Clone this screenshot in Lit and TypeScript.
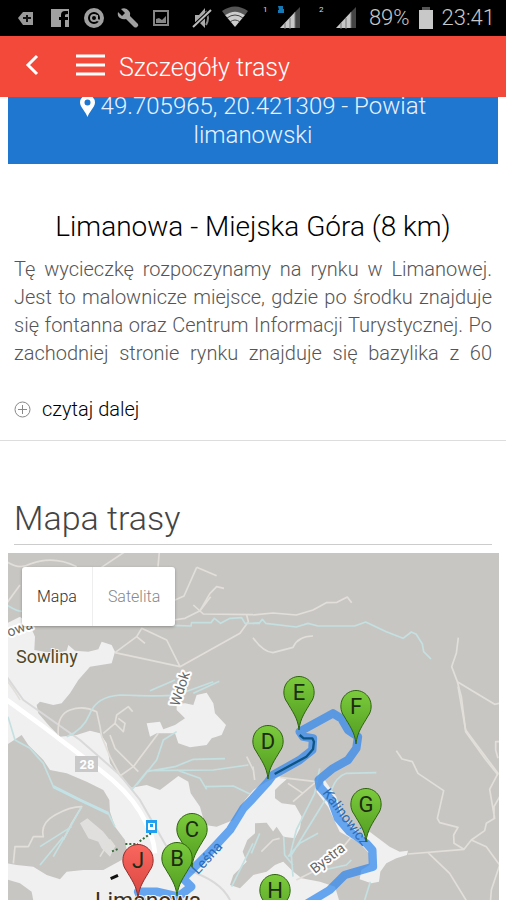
import { LitElement, html, svg, css } from "lit";
import { customElement, state } from "lit/decorators.js";

interface Pin {
  letter: string;
  x: number;
  y: number;
  kind?: "end";
}

const PINS: Pin[] = [
  { letter: "E", x: 291, y: 139 },
  { letter: "F", x: 348, y: 153 },
  { letter: "D", x: 260, y: 188 },
  { letter: "G", x: 358, y: 251 },
  { letter: "C", x: 184, y: 276 },
  { letter: "B", x: 169, y: 305 },
  { letter: "J", x: 130, y: 307, kind: "end" },
  { letter: "H", x: 267, y: 337 },
];

@customElement("status-bar")
export class StatusBar extends LitElement {
  static styles = css`
    :host {
      display: flex;
      justify-content: space-between;
      align-items: center;
      height: 36px;
      padding: 0 11px 0 15px;
      background: #000;
      color: #c8c8c8;
      font: 400 22px/36px Roboto, sans-serif;
    }
    .group {
      display: flex;
      align-items: center;
      gap: 12px;
    }
    .system {
      gap: 8px;
    }
    .clock {
      font-weight: 300;
    }
    .icon {
      display: block;
      width: 22px;
      height: 24px;
    }
    .wifi {
      width: 28px;
    }
    .sim {
      width: 48px;
    }
    .battery {
      width: 16px;
    }
    .digit {
      font: 400 8px Roboto, sans-serif;
      fill: #ddd;
    }
  `;

  private sim(n: string, data: boolean) {
    return html`<svg class="icon sim" viewBox="0 0 48 24">
      <text class="digit" x="6" y="6">${n}</text>
      ${data
        ? svg`<path d="M21 0h5v3h1v4h-6v-3h1z" fill="#1479b4" />`
        : ""}
      <path d="M43 1v21h-5V6z" fill="#444" />
      <path d="M38 6v16H23z" fill="#c8c8c8" />
      <path d="M28 17v6M33 12v11M38 6v16" stroke="#777" stroke-width="1" />
    </svg>`;
  }

  render() {
    return html`
      <div class="group">
        <svg class="icon" viewBox="0 0 22 24">
          <path d="M3 12l5-6h10v13H8z" fill="#999" />
          <path d="M12 9v7M8 12h8" stroke="#111" stroke-width="2" />
        </svg>
        <svg class="icon" viewBox="0 0 22 24">
          <path d="M2 3h18v18h-4v-7h3v-3h-3V9q0-1 3-1V5h-3q-4 0-4 4v2h-2v3h2v7H2z" fill="#a0a0a0" />
        </svg>
        <svg class="icon" viewBox="0 0 22 24">
          <circle cx="11" cy="12" r="8" fill="none" stroke="#a0a0a0" stroke-width="4" />
          <circle cx="11" cy="12" r="3" fill="none" stroke="#a0a0a0" stroke-width="2" />
          <path d="M14 9v5l3 1" fill="none" stroke="#a0a0a0" stroke-width="2" />
        </svg>
        <svg class="icon" viewBox="0 0 22 24">
          <path d="M1 6l4 4 3-3-4-4q5-2 8 2 2 2 1 5l8 8q1 2-1 3-1 1-3 0l-8-8q-3 1-6-1-3-2-2-6z" fill="#a0a0a0" />
        </svg>
        <svg class="icon" viewBox="0 0 22 24">
          <rect x="3" y="5" width="14" height="14" fill="none" stroke="#858585" stroke-width="2" />
          <path d="M5 17v-4l3-1 3 2 4-4v7z" fill="#858585" />
        </svg>
      </div>
      <div class="group system">
        <svg class="icon" viewBox="0 0 22 24">
          <path d="M4 9h4l6-7v20l-6-6H4z" fill="#aaa" />
          <path d="M15 5q4 7 0 14" fill="none" stroke="#888" stroke-width="2" />
          <path d="M2 21L20 4" stroke="#000" stroke-width="4" />
          <path d="M2 21L20 4" stroke="#bbb" stroke-width="2" />
        </svg>
        <svg class="icon wifi" viewBox="0 0 28 24">
          <path d="M1 5q13-9 26 0l-3 4q-10-7-20 0z" fill="#555" />
          <path d="M4 9q10-7 20 0L14 21z" fill="#ccc" />
          <path d="M6 12q8-6 16 0M9 16q5-4 10 0" fill="none" stroke="#444" stroke-width="1" />
        </svg>
        ${this.sim("1", true)} ${this.sim("2", false)}
        <span class="clock">89%</span>
        <svg class="icon battery" viewBox="0 0 16 24">
          <path d="M4 1h8v3H4z" fill="#555" />
          <path d="M1 4h14v19H1z" fill="#c8c8c8" />
        </svg>
        <span class="clock">23:41</span>
      </div>
    `;
  }
}

@customElement("route-map")
export class RouteMap extends LitElement {
  @state() private view = "mapa";

  static styles = css`
    :host {
      display: grid;
      background: #c8c6c3;
      overflow: hidden;
      min-height: 0;
    }
    .canvas,
    .switch {
      grid-area: 1 / 1;
    }
    .canvas {
      width: 100%;
      height: 100%;
      min-height: 0;
    }
    .switch {
      justify-self: start;
      align-self: start;
      z-index: 1;
      display: flex;
      margin: 14px;
      border-radius: 3px;
      background: #fff;
      box-shadow: 0 1px 3px rgba(0, 0, 0, 0.3);
    }
    .tab {
      height: 59px;
      padding: 0 15px;
      border: 0;
      background: none;
      color: #888;
      font: 300 16px/59px Roboto, sans-serif;
    }
    .tab + .tab {
      border-left: 1px solid #eee;
    }
    .tab.on {
      color: #333;
    }
    .land {
      fill: #c8c6c3;
    }
    .town {
      fill: #f0f0f0;
    }
    .road,
    .water,
    .wide,
    .lane {
      fill: none;
      stroke: #e2dfda;
      stroke-width: 5;
      stroke-linejoin: round;
    }
    .water {
      stroke: #c4e0e0;
    }
    .lane {
      stroke: #d9d9d9;
      stroke-width: 6;
    }
    .wide {
      stroke: #fff;
      stroke-width: 14;
    }
    .trail {
      fill: none;
      stroke: #2f86ee;
      stroke-opacity: 0.72;
      stroke-width: 25;
      stroke-linejoin: round;
      stroke-linecap: round;
    }
    .trail-core {
      fill: none;
      stroke: #0c5585;
      stroke-width: 7;
      stroke-linejoin: round;
    }
    .place {
      font: 400 18px Roboto, sans-serif;
      fill: #4f4828;
      stroke: #f4f4f4;
      stroke-width: 2px;
      paint-order: stroke;
    }
    .city {
      font-size: 23px;
      fill: #3d3020;
    }
    .street {
      font: 400 14px Roboto, sans-serif;
      fill: #666;
      stroke: #fff;
      stroke-width: 4px;
      stroke-linejoin: round;
      paint-order: stroke;
    }
    .on-trail {
      fill: #2a6cb8;
      stroke: none;
    }
    .shield {
      font: 700 13px Roboto, sans-serif;
      fill: #fff;
      text-anchor: middle;
    }
    .letter {
      font: 400 22px Roboto, sans-serif;
      fill: #1c2c12;
      text-anchor: middle;
    }
    .pin {
      fill: url(#green);
      stroke: #2f6310;
    }
    .pin.end {
      fill: url(#red);
      stroke: #8e2f2c;
    }
  `;

  private pin(p: Pin) {
    return svg`<g transform="translate(${p.x} ${p.y})">
      <path class="pin ${p.kind ?? ""}" d="M0 38C-1 26-7 19-12 10C-16 5-16-3-13-8C-7-18 7-18 13-8C16-3 16 5 12 10C7 19 1 26 0 38Z" />
      <text class="letter" y="8">${p.letter}</text>
    </g>`;
  }

  private tab(id: string, label: string) {
    const on = this.view === id;
    return html`<button
      class="tab ${on ? "on" : ""}"
      aria-pressed=${on}
      @click=${() => (this.view = id)}
    >${label}</button>`;
  }

  render() {
    return html`
      <svg class="canvas" viewBox="0 0 491 347" preserveAspectRatio="xMidYMin slice">
        <defs>
          <linearGradient id="green" x2="0" y2="1">
            <stop offset="0" stop-color="#7ccb3c" />
            <stop offset="1" stop-color="#4f9a20" />
          </linearGradient>
          <linearGradient id="red" x2="0" y2="1">
            <stop offset="0" stop-color="#f9675f" />
            <stop offset="1" stop-color="#d94640" />
          </linearGradient>
        </defs>
        <g transform="scale(0.33333)">
          <g transform="translate(-24 411)">
            <path class="town" d="M20-200L60-220 90-195 105-160 103-120 160-110 200-118 205-135 225-118 265-115 295-122 305-145 335-135 345-115 335-80 270-70 235-30 210 10 185 40 160 45 120 35 110 45 115 70 150 110 180 140 230 135 270 122 300 130 320 160 330 220 360 260 395 293 440 285 480 300 535 258 565 275 572 310 600 350 615 405 650 410 700 390 735 330 760 300 800 275 835 258 860 268 840 285 825 300 825 325 845 340 885 345 905 380 900 415 885 445 850 440 830 410 800 450 830 520 850 515 880 545 905 565 960 575 1005 590 1020 640 1020 1000 20 1000Z" />
            <path class="land" d="M20 165L65 135 85 165 130 210 150 240 200 250 260 275 310 300 328 330 330 365 345 410 375 450 380 480 365 510 310 540 250 540 200 545 180 568 140 555 100 530 50 525 20 520Z" />
            <path class="land" d="M20 568L60 580 95 605 105 660 20 660Z" />
            <path class="town" d="M240 400L262 385 310 425 345 470 330 500 305 475 295 455 265 445Z" opacity=".6" />
            <path class="land" d="M765 400L800 398 820 425 812 460 850 440 865 490 848 515 825 525 800 545 760 555 720 595 690 585 700 555 740 515 728 485 742 450 765 430Z" />
            <path class="town" d="M440 100L480 95 490 118 525 105 555 85 530 60 530 42 555 40 580 45 590 15 620 8 640 40 645 70 678 105 665 135 635 145 620 165 570 172 535 160 525 130 470 130 450 140Z" />
          </g>
          <g transform="translate(735 411)">
            <path class="town" d="M215 270L250 320 270 385 330 440 350 425 410 470 440 485 465 482 462 495 430 505 400 520 382 545 378 575 355 580 320 568 325 540 350 525 348 490 320 460 260 425 225 350 190 305Z" />
          </g>
          <g transform="translate(-24 -219)">
            <path class="road" d="M20 245Q60 270 90 252 160 225 230 260M300 265L375 215M478 215L474 260M20 370L60 315M590 262L650 287M590 262L552 348 520 362M520 420L555 415 600 392 630 340 650 320 672 325M632 350L600 392M580 375L610 402 759 404M740 405L745 425 720 460 540 560 345 518M540 560L500 480 425 445 410 470 345 518M410 470L435 490M20 600Q50 640 60 660" />
            <path class="water" d="M20 375Q60 400 70 392M515 436L573 438 575 428 633 428 643 415 662 430 690 415 725 413 735 430 780 430M450 632L525 600M658 604L580 640" />
          </g>
          <g transform="translate(735 -39)">
            <path class="road" d="M0 225L60 219 130 225 180 210 220 188 252 187 283 171 296 188M0 293Q30 335 60 338L120 322Q135 288 180 288M616 293L610 340 596 380 613 425 725 493 740 490M613 425L625 470 638 575 695 655 735 705M650 448L725 493" />
            <path class="water" d="M0 250L20 248 28 238 38 250 130 261 165 250 195 258 305 258 338 246 400 275 450 295 475 276 490 283 508 312 512 335 534 357" />
          </g>
          <g transform="translate(-24 411)">
            <path class="lane" d="M20-40L70 30 240 150 360 255 420 330 500 470M560 540Q660 570 690 630" />
            <path class="wide" d="M10 22L130 110 300 240Q380 300 420 365T465 490" />
            <path class="road" d="M175 135Q170 75 210 60T290 65L300 110 305 140 330 200 360 255M310 130L345 100 350 75 385 50 398 65M345 100L370 125 375 100 355 85M330 135L345 175 415 245M360 258L400 230 475 130M40 520L45 470 85 470 100 440 130 440Q120 400 165 375T245 350L215 400 190 450M300 500L330 450 345 470M740 200L760 240" />
            <path class="water" d="M200 140Q250 120 270 70T360 15Q480 20 530 15L640-25M24 80L45 150 90 175 130 220 160 290 240 330 325 370 345 410M395 300L440 245 525 230 580 208 675 206M410 285L470 210 490 150 530 125M440 242L640 240 745 225M530 240L600 265 620 298M615 290L700 288 750 312M245 350L200 430 160 500M215 410L120 470M190 440L120 525M759 460L695 590" />
            <path d="M160 290L240 330 325 370" fill="none" stroke="#c3e2e6" stroke-width="9" />
          </g>
          <g transform="translate(735 411)">
            <path class="road" d="M430 182L447 207 478 215 495 250 572 302 553 385 560 398 615 412 602 435 603 460 633 478 465 492M615-10L638 120 735 250 710 298 725 385 700 400 695 422 655 450 633 478M655 450L700 470 740 525 715 600 712 640M525 488L590 550 645 640M740 155H728V180L735 205M723 385V350L740 320M80 262L190 275 120 335M105 280L150 310M0 230L5 270M25 485L60 450 80 445M130 570L230 520 300 435" />
            <path class="water" d="M370 248L280 250Q250 260 235 300L115 495 120 560M200 235L185 310 130 420 110 500M92 440L95 495 120 525M195 430L140 460 105 500M295 510L280 525 190 545M352 575L335 630M20 430L-5 490M650 250" />
            <path class="trail" d="M160 642L230 600 275 555 360 530 358 480 340 460 290 425 255 385 235 330 200 290 197 270 240 235 285 210 310 175 315 140 285 120 265 85 240 70 140 125 150 140 180 145 178 180 140 210 60 255 45 275 0 325 -29 355 -69 420 -129 485 -179 535 -210 565 -185 590 -224 620 -290 605 -345 605 -330 640" />
            <path class="trail-core" d="M140 135L152 145 178 145 183 155 180 178 160 200 65 252" />
          </g>
          <path d="M312 895L330 888M352 873H390M395 865L430 840" fill="none" stroke="#316b38" stroke-width="6" stroke-dasharray="6 6" />
          <path d="M308 977L330 967" stroke="#111" stroke-width="9" />
        </g>
        <rect x="67" y="203" width="23" height="16" fill="#c9c9c9" />
        <text class="shield" x="79" y="216">28</text>
        <rect x="138" y="267" width="11" height="13" fill="#20a0ee" />
        <path d="M140 270h7v7h-7z" fill="#fff" />
        <path d="M142 271h3v3h-3z" fill="#20a0ee" />
        <text class="place" x="8" y="110">Sowliny</text>
        <text class="street" transform="translate(1 84) rotate(-20)">owa</text>
        <text class="street" transform="translate(171 154) rotate(-72)">Wdok</text>
        <text class="street" transform="translate(307 321) rotate(-38)">Bystra</text>
        <text class="street on-trail" transform="translate(314 240) rotate(53)">Kalinowicz</text>
        <text class="street on-trail" transform="translate(190 322) rotate(-48)">Leśna</text>
        <text class="place city" x="87" y="356">Limanowa</text>
        ${PINS.map((p) => this.pin(p))}
      </svg>
      <div class="switch" role="group" aria-label="Mapa">
        ${this.tab("mapa", "Mapa")}${this.tab("satelita", "Satelita")}
      </div>
    `;
  }
}

@customElement("app-root")
export class AppRoot extends LitElement {
  static styles = css`
    :host {
      display: flex;
      flex-direction: column;
      height: 100vh;
      overflow: hidden;
      background: #fff;
      color: #222;
      font-family: Roboto, sans-serif;
    }
    .bar {
      z-index: 1;
      flex: none;
      display: flex;
      align-items: center;
      height: 61px;
      padding: 0 24px;
      background: #f2493b;
      color: #fff;
    }
    .tool {
      display: flex;
      padding: 0 0 4px;
      border: 0;
      background: none;
      color: inherit;
    }
    .menu {
      margin: 0 14px 0 36px;
    }
    .title {
      margin: 0;
      padding-top: 2px;
      font-size: 25px;
      font-weight: 300;
      line-height: 32px;
    }
    .page {
      flex: 1;
      min-height: 0;
      display: flex;
      flex-direction: column;
      overflow: hidden;
    }
    .place {
      flex: none;
      margin: -20px 8px 0;
      padding: 15px 60px 14px;
      background: #1f77d0;
      color: #e8f2ff;
      font-size: 24px;
      font-weight: 300;
      line-height: 29px;
      text-align: center;
      text-decoration: none;
    }
    .marker {
      width: 15px;
      height: 22px;
      vertical-align: -3px;
    }
    .about {
      flex: none;
      padding: 46px 14px 17px;
      border-bottom: 1px solid #ddd;
    }
    .name {
      margin: 0 0 11px;
      font-size: 28px;
      font-weight: 300;
      line-height: 34px;
      text-align: center;
      color: #000;
    }
    .text {
      margin: 0;
      color: #555;
      font-size: 20px;
      font-weight: 300;
      line-height: 28px;
      text-align: justify;
      text-align-last: justify;
    }
    .more {
      display: flex;
      align-items: center;
      gap: 11px;
      margin-top: 28px;
      padding: 0;
      border: 0;
      background: none;
      color: #000;
      font: 300 20px/28px Roboto, sans-serif;
    }
    .section {
      flex: none;
      margin: 54px 14px 8px;
      padding-bottom: 3px;
      border-bottom: 1px solid #ccc;
      color: #444;
      font-size: 34px;
      font-weight: 300;
      line-height: 46px;
    }
    route-map {
      flex: 1;
      margin: 0 7px 0 8px;
    }
  `;

  render() {
    return html`
      <status-bar></status-bar>
      <header class="bar">
        <button class="tool" aria-label="Wstecz">
          <svg width="16" height="24" viewBox="0 0 16 24">
            <path d="M13 3L4 12L13 21" fill="none" stroke="#fff" stroke-width="3" />
          </svg>
        </button>
        <button class="tool menu" aria-label="Menu">
          <svg width="29" height="24" viewBox="0 0 29 24">
            <path d="M0 3H29M0 12H29M0 21H29" stroke="#fff" stroke-width="3" />
          </svg>
        </button>
        <h1 class="title">Szczegóły trasy</h1>
      </header>
      <main class="page">
        <a class="place" href="#mapa">
          <svg class="marker" viewBox="0 0 15 22">
            <path d="M7.500 22C6 17 0 12 0 7.500a7.500 7.500 0 0 1 15 0C15 12 9 17 7.500 22ZM7.500 4.500a3 3 0 1 0 0 6 3 3 0 0 0 0-6Z" fill="#fff" fill-rule="evenodd" />
          </svg>
          49.705965, 20.421309 - Powiat limanowski
        </a>
        <section class="about">
          <h2 class="name">Limanowa - Miejska Góra (8 km)</h2>
          <p class="text">
            Tę wycieczkę rozpoczynamy na rynku w Limanowej. Jest to malownicze
            miejsce, gdzie po środku znajduje się fontanna oraz Centrum
            Informacji Turystycznej. Po zachodniej stronie rynku znajduje się
            bazylika z 60
          </p>
          <button class="more">
            <svg width="17" height="17" viewBox="0 0 17 17">
              <circle cx="8.500" cy="8.500" r="7.500" fill="none" stroke="#888" />
              <path d="M4 8.500H13M8.500 4V13" stroke="#888" />
            </svg>
            czytaj dalej
          </button>
        </section>
        <h2 class="section">Mapa trasy</h2>
        <route-map id="mapa"></route-map>
      </main>
    `;
  }
}
